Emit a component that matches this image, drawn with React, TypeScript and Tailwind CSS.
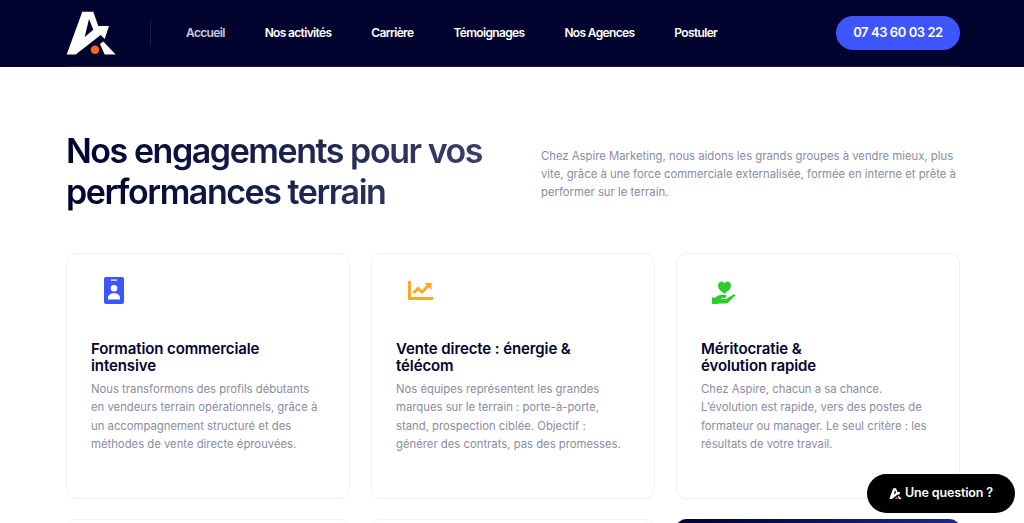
import React from 'react';

const navLinks = ['Accueil', 'Nos activités', 'Carrière', 'Témoignages', 'Nos Agences', 'Postuler'];

const BadgeIcon = () => (
  <svg width="20" height="27" viewBox="0 0 20 27" className="block">
    <path
      fill="#3d55fb"
      fillRule="evenodd"
      d="M2 0h16a2 2 0 0 1 2 2v23a2 2 0 0 1-2 2H2a2 2 0 0 1-2-2V2a2 2 0 0 1 2-2zM7 2.500v1.200h6V2.500zM10 8a3.300 3.300 0 1 0 0 6.600a3.300 3.300 0 0 0 0-6.600zM4 22.500v-1.800c0-2.700 2.500-4.500 6-4.500s6 1.800 6 4.500v1.800z"
    />
  </svg>
);

const ChartIcon = () => (
  <svg width="25" height="19" viewBox="0 0 25 19" fill="none" stroke="#fca62a" className="block">
    <path d="M1.500 0v17.500H25" strokeWidth="3" />
    <path d="M5.500 12l4.500-4.500 4 3.500 6-6" strokeWidth="3" />
    <path d="M16.500 2h7v7z" fill="#fca62a" stroke="none" />
  </svg>
);

const HeartHandIcon = () => (
  <svg width="24" height="23" viewBox="0 0 24 23" fill="#2ecb2e" className="block">
    <path d="M12.500 13C9 10 6 8 6 4.800C6 2.300 7.700 0.500 9.500 0.500c1.300 0 2.400 .7 3 2c.6-1.300 1.700-2 3-2c1.800 0 3.500 1.800 3.500 4.300c0 3.200-3 5.200-6.500 8.200z" />
    <path d="M0 16.500h3.500c1.500-1.500 3-2.500 5-2.500h5c1.500 0 1.500 3-.5 3h-3.500v1h4.500l7.500-4.500c1-.6 2.200 .7 1.300 1.600l-6.500 6.500c-.5 .5-1 .9-1.800 .9H7.500c-1 0-1.500 .2-2 .5H0z" />
  </svg>
);

const Logo = ({ size = 50 }: { size?: number }) => (
  <svg width={size} height={size * 0.88} viewBox="0 0 50 44" className="block">
    <path
      fill="#ffffff"
      fillRule="evenodd"
      d="M16.300 0.700H27.300L32.300 15H43L38.700 28L34.700 24L9.700 43.500H0.700ZM23 8L18.700 26L27.300 18.700Z"
    />
    <path fill="#ffffff" d="M37.300 30.500L49.700 43.500H38.700L34 33Z" />
    <circle cx="29" cy="38.700" r="4.300" fill="#f26522" />
  </svg>
);

const cards = [
  {
    icon: <BadgeIcon />,
    iconBox: 'pl-[13px] pt-[23px]',
    title: ['Formation commerciale', 'intensive'],
    text: 'Nous transformons des profils débutants en vendeurs terrain opérationnels, grâce à un accompagnement structuré et des méthodes de vente directe éprouvées.',
  },
  {
    icon: <ChartIcon />,
    iconBox: 'pl-[12px] pt-[27px]',
    title: ['Vente directe : énergie &', 'télécom'],
    text: 'Nos équipes représentent les grandes marques sur le terrain : porte-à-porte, stand, prospection ciblée. Objectif : générer des contrats, pas des promesses.',
  },
  {
    icon: <HeartHandIcon />,
    iconBox: 'pl-[11px] pt-[27px]',
    title: ['Méritocratie &', 'évolution rapide'],
    text: 'Chez Aspire, chacun a sa chance. L’évolution est rapide, vers des postes de formateur ou manager. Le seul critère : les résultats de votre travail.',
  },
];

export default function App() {
  return (
    <div className="h-[523px] overflow-hidden bg-white font-['Inter',sans-serif]">
      <header className="h-[67px] bg-[#01032f] pl-[66px] pr-[64px]">
        <div className="flex h-full items-center border-b border-[#1b1d47]">
          <Logo />
          <div className="ml-[34px] h-[26px] w-px bg-[#1b1d47]" />
          <nav className="ml-[35px] flex gap-[40px] text-[12px] font-semibold tracking-[-0.66px]">
            {navLinks.map((link, i) => (
              <a key={link} className={i === 0 ? 'text-[#c9cbe0]' : 'text-white'}>
                {link}
              </a>
            ))}
          </nav>
          <a className="ml-auto flex h-[34px] w-[124px] items-center justify-center rounded-full bg-[#3d55fb] text-[13px] font-semibold tracking-[-0.45px] text-white">
            07 43 60 03 22
          </a>
        </div>
      </header>

      <main className="pl-[66px] pr-[64px]">
        <section className="flex pt-[63px]">
          <h1 className="w-[475px] shrink-0 bg-gradient-to-r from-[#01032f] to-[#454870] bg-clip-text text-[34px] font-semibold leading-[41px] tracking-[-1.45px] text-transparent">
            Nos engagements pour vos
            <br />
            performances terrain
          </h1>
          <p className="mt-[17px] w-[419px] text-[11.3px] leading-[18px] text-[#8a8ca3]">
            Chez Aspire Marketing, nous aidons les grands groupes à vendre mieux, plus vite, grâce à une force commerciale externalisée, formée en interne et prête à performer sur le terrain.
          </p>
        </section>

        <section className="mt-[41px] grid grid-cols-3 gap-x-[21px] gap-y-[20px]">
          {cards.map((card) => (
            <div key={card.title[0]} className="h-[246px] rounded-[10px] border border-[#eff0f3] px-[24px]">
              <div className={`h-[86px] ${card.iconBox}`}>{card.icon}</div>
              <h3 className="text-[15px] font-semibold leading-[17px] tracking-[-0.1px] text-[#01032f]">
                {card.title[0]}
                <br />
                {card.title[1]}
              </h3>
              <p className="mt-[6px] w-[228px] text-[11.3px] leading-[18.300px] text-[#8a8ca3]">{card.text}</p>
            </div>
          ))}
          <div className="h-[246px] rounded-[10px] border border-[#eff0f3]" />
          <div className="h-[246px] rounded-[10px] border border-[#eff0f3]" />
          <div className="h-[246px] rounded-[10px] bg-gradient-to-r from-[#01032f] to-[#1c2a8c]" />
        </section>
      </main>

      <button className="fixed left-[867px] top-[474px] flex h-[39px] w-[148px] items-center justify-center gap-[3px] rounded-full bg-black text-[12.5px] font-semibold tracking-[-0.15px] text-white">
        <Logo size={13} />
        Une question ?
      </button>
    </div>
  );
}
